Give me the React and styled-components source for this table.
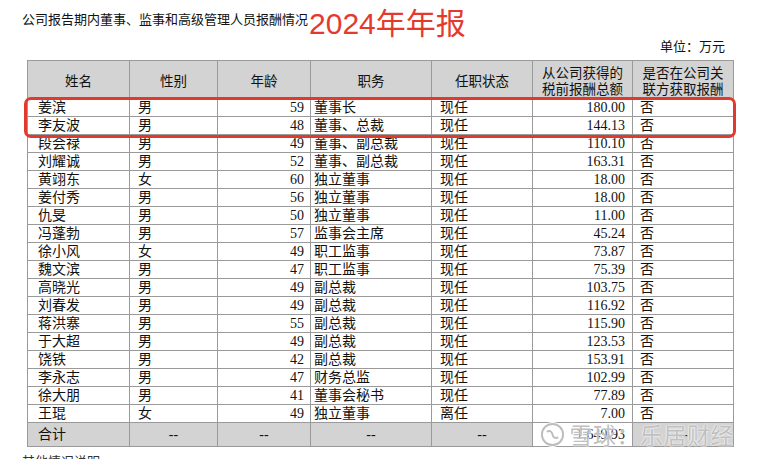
import React from 'react';
import styled, { createGlobalStyle } from 'styled-components';

const rows = [
    ['姜滨', '男', 59, '董事长', '现任', '180.00', '否'],
    ['李友波', '男', 48, '董事、总裁', '现任', '144.13', '否'],
    ['段会禄', '男', 49, '董事、副总裁', '现任', '110.10', '否'],
    ['刘耀诚', '男', 52, '董事、副总裁', '现任', '163.31', '否'],
    ['黄翊东', '女', 60, '独立董事', '现任', '18.00', '否'],
    ['姜付秀', '男', 56, '独立董事', '现任', '18.00', '否'],
    ['仇旻', '男', 50, '独立董事', '现任', '11.00', '否'],
    ['冯蓬勃', '男', 57, '监事会主席', '现任', '45.24', '否'],
    ['徐小风', '女', 49, '职工监事', '现任', '73.87', '否'],
    ['魏文滨', '男', 47, '职工监事', '现任', '75.39', '否'],
    ['高晓光', '男', 49, '副总裁', '现任', '103.75', '否'],
    ['刘春发', '男', 49, '副总裁', '现任', '116.92', '否'],
    ['蒋洪寨', '男', 55, '副总裁', '现任', '115.90', '否'],
    ['于大超', '男', 49, '副总裁', '现任', '123.53', '否'],
    ['饶铁', '男', 42, '副总裁', '现任', '153.91', '否'],
    ['李永志', '男', 47, '财务总监', '现任', '102.99', '否'],
    ['徐大朋', '男', 41, '董事会秘书', '现任', '77.89', '否'],
    ['王琨', '女', 49, '独立董事', '离任', '7.00', '否'],
];

const widths = [102, 88, 93, 121, 101, 100, 101];

const App = () => {
    return (
        <Page>
            <GlobalStyle />
            <TitleRow>
                <Caption>公司报告期内董事、监事和高级管理人员报酬情况</Caption>
                <Headline>2024年年报</Headline>
            </TitleRow>
            <Unit>单位：万元</Unit>
            <TableWrap>
                <Table>
                    <colgroup>
                        {widths.map((w, i) => <col key={i} style={{ width: w }} />)}
                    </colgroup>
                    <thead>
                        <tr>
                            <Th>姓名</Th>
                            <Th>性别</Th>
                            <Th>年龄</Th>
                            <Th>职务</Th>
                            <Th>任职状态</Th>
                            <Th>从公司获得的<br />税前报酬总额</Th>
                            <Th>是否在公司关<br />联方获取报酬</Th>
                        </tr>
                    </thead>
                    <tbody>
                        {rows.map((r) => (
                            <tr key={r[0]}>
                                <Td $pad="0 0 0 10px">{r[0]}</Td>
                                <Td $pad="0 0 0 8px">{r[1]}</Td>
                                <Td $align="right" $pad="0 6px 0 0">{r[2]}</Td>
                                <Td $pad="0 0 0 3px">{r[3]}</Td>
                                <Td $pad="0 0 0 8px">{r[4]}</Td>
                                <Td $align="right" $pad="0 7px 0 0">{r[5]}</Td>
                                <Td $pad="0 0 0 7px">{r[6]}</Td>
                            </tr>
                        ))}
                        <TotalRow>
                            <Td $pad="0 0 0 10px" $grey>合计</Td>
                            <Td $align="center" $grey>--</Td>
                            <Td $align="center" $grey>--</Td>
                            <Td $align="center" $grey>--</Td>
                            <Td $align="center" $grey>--</Td>
                            <Td $align="right" $pad="0 7px 0 0">1,649.93</Td>
                            <Td $align="center" $grey>--</Td>
                        </TotalRow>
                    </tbody>
                </Table>
                <Highlight />
                <Watermark>
                    <Ball viewBox="0 0 26 26">
                        <circle cx="13" cy="13" r="11" fill="none" stroke="#fff" strokeWidth="4" />
                        <circle cx="13" cy="13" r="11" fill="none" stroke="#bdbdbd" strokeWidth="2" />
                        <path d="M7 10 Q12 8 13 13 Q14 18 19 16" fill="none" stroke="#bdbdbd" strokeWidth="2" />
                    </Ball>
                    <span>雪球：乐居财经</span>
                </Watermark>
            </TableWrap>
            <Note>其他情况说明</Note>
        </Page>
    );
};

const GlobalStyle = createGlobalStyle`
    html, body {
        margin: 0;
        padding: 0;
        background: #fff;
        overflow: hidden;
        height: 459px;
    }
    body {
        font-family: "Liberation Serif", "Noto Sans CJK SC", serif;
        color: #111;
    }
`;

const Page = styled.div`
    width: 759px;
    height: 459px;
    padding: 6px 0 0 22px;
    box-sizing: border-box;
    position: relative;
`;

const TitleRow = styled.div`
    display: flex;
    align-items: flex-start;
    height: 34px;
`;

const Caption = styled.div`
    font-family: "Noto Sans CJK SC", sans-serif;
    font-size: 13px;
    line-height: 20px;
    margin-top: 3px;
`;

const Headline = styled.div`
    font-family: "Liberation Sans", "Noto Sans CJK SC", sans-serif;
    font-size: 30px;
    line-height: 32px;
    color: #e43a2e;
    margin-left: 1px;
    margin-top: 2px;
`;

const Unit = styled.div`
    font-family: "Noto Sans CJK SC", sans-serif;
    font-size: 13px;
    line-height: 16px;
    text-align: right;
    width: 703px;
    margin-top: -2px;
`;

const TableWrap = styled.div`
    position: relative;
    margin: 6px 0 0 5px;
    width: 707px;
`;

const Table = styled.table`
    border-collapse: collapse;
    table-layout: fixed;
    width: 706px;
    border: 1px solid #8a8a8a;
    font-size: 14px;
`;

const Th = styled.th`
    background: #d3d3d3;
    border: 1px solid #9a9a9a;
    height: 37px;
    padding: 0;
    font-weight: normal;
    font-family: "Noto Sans CJK SC", sans-serif;
    font-size: 13.5px;
    line-height: 16px;
    text-align: center;
    vertical-align: middle;
`;

const Td = styled.td`
    border: 1px solid #9a9a9a;
    height: 17px;
    padding: ${(p) => p.$pad || '0'};
    text-align: ${(p) => p.$align || 'left'};
    background: ${(p) => (p.$grey ? '#d3d3d3' : '#fff')};
    line-height: 17px;
    white-space: nowrap;
    overflow: hidden;
`;

const TotalRow = styled.tr`
    td {
        height: 23px;
    }
`;

const Highlight = styled.div`
    position: absolute;
    left: -3px;
    top: 37px;
    width: 706px;
    height: 35px;
    border: 3px solid #e13a2c;
    border-radius: 7px;
    pointer-events: none;
`;

const Watermark = styled.div`
    position: absolute;
    right: 0;
    bottom: 0;
    display: flex;
    align-items: center;
    gap: 5px;
    font-family: "Noto Sans CJK SC", sans-serif;
    font-size: 23px;
    line-height: 26px;
    color: rgba(175, 175, 175, 0.8);
    text-shadow: 0 0 2px #fff, 0 0 1px #fff;
    letter-spacing: 0.5px;
`;

const Ball = styled.svg`
    width: 25px;
    height: 25px;
`;

const Note = styled.div`
    font-family: "Noto Sans CJK SC", sans-serif;
    font-size: 13px;
    line-height: 16px;
    margin-top: 6px;
    color: #333;
`;

export default App;
